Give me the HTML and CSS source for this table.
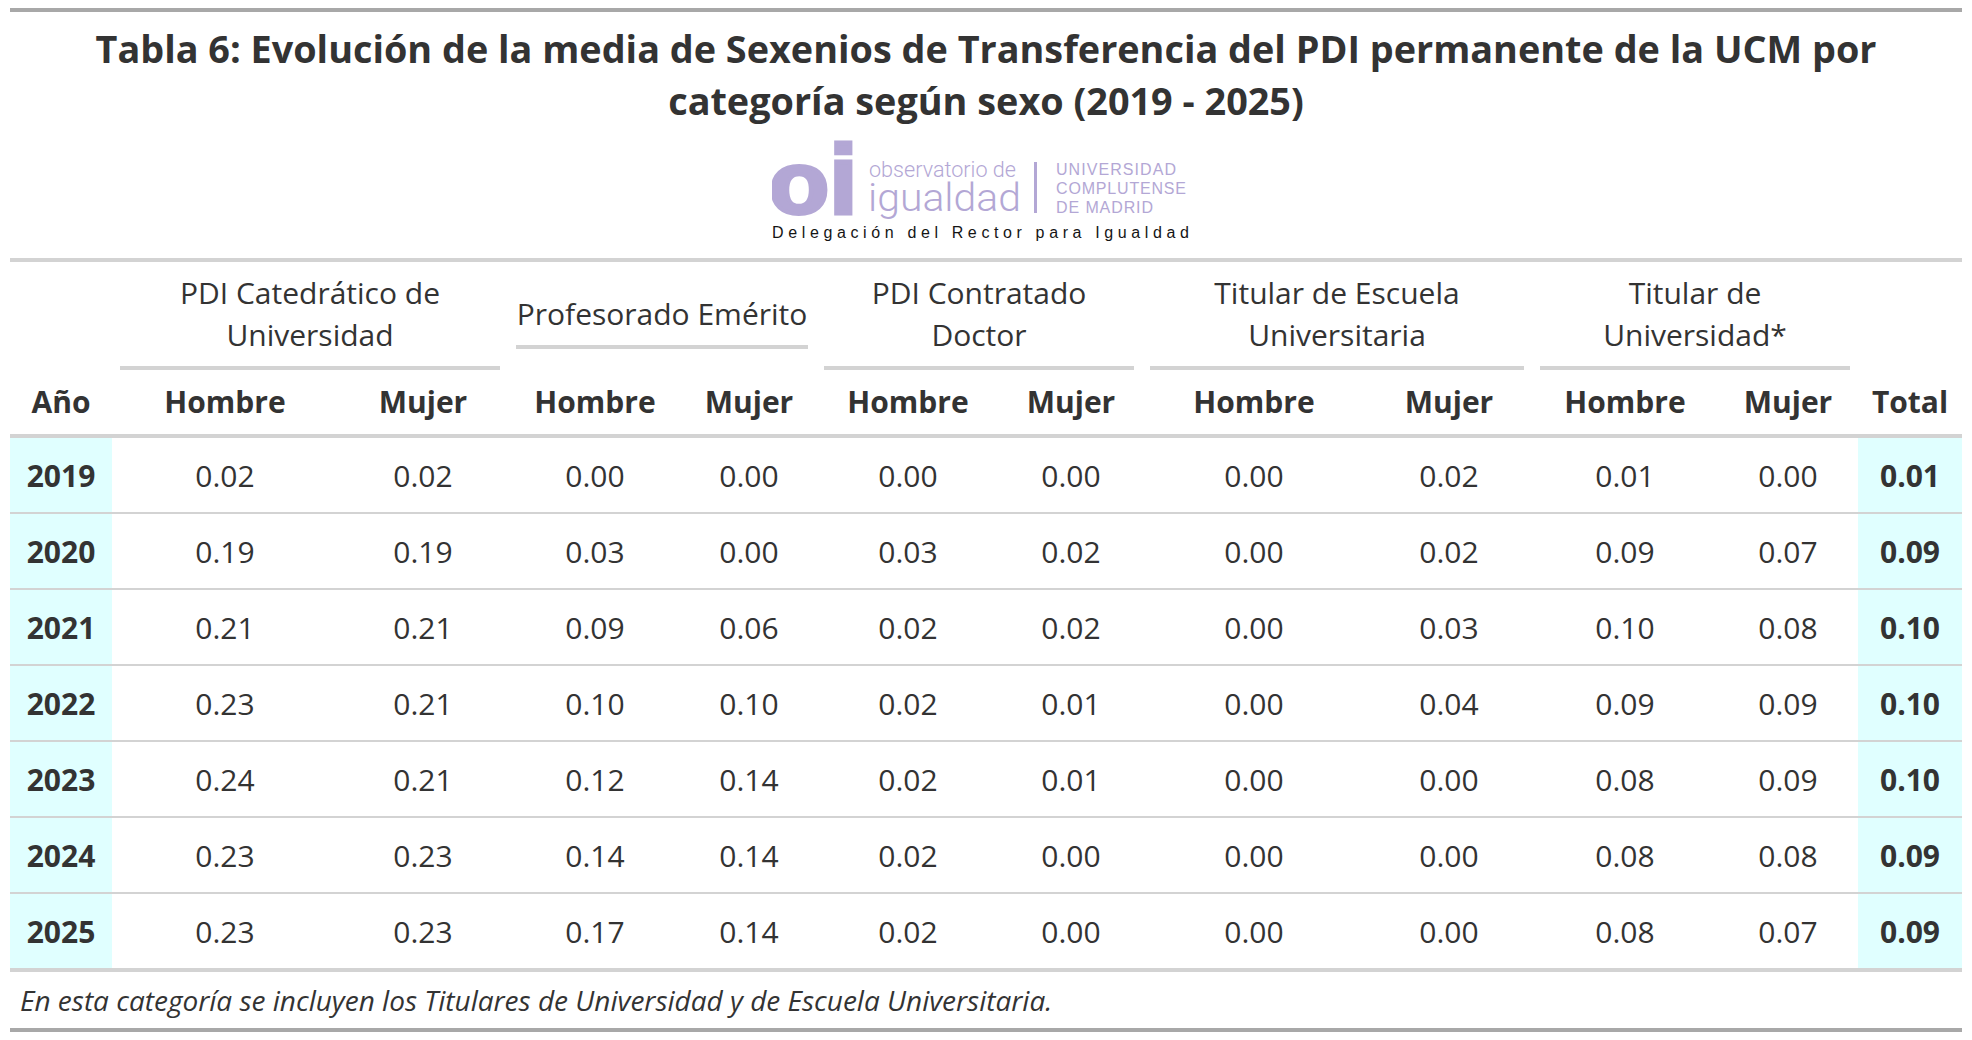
FILE: index.html
```html
<!DOCTYPE html>
<html lang="es">
<head>
<meta charset="utf-8">
<title>Tabla 6</title>
<link rel="stylesheet" href="styles.css">
</head>
<body>
<div class="gt">
  <div class="heading">
    <div class="title">Tabla 6: Evolución de la media de Sexenios de Transferencia del PDI permanente de la UCM por categoría según sexo (2019 - 2025)</div>
    <svg class="logo" width="418" height="106" viewBox="0 -4 418 106" xmlns="http://www.w3.org/2000/svg">
      <text class="lg-o" x="-3" y="71" textLength="60" lengthAdjust="spacingAndGlyphs">o</text>
      <text class="lg-i" x="58" y="71">i</text>
      <text class="lg-obs" x="97" y="35" textLength="147" lengthAdjust="spacingAndGlyphs">observatorio de</text>
      <text class="lg-ig" x="96" y="69" textLength="153" lengthAdjust="spacingAndGlyphs">igualdad</text>
      <rect class="lg-bar" x="262" y="20" width="3" height="51"/>
      <text class="lg-ucm" x="284" y="33" textLength="120">UNIVERSIDAD</text>
      <text class="lg-ucm" x="284" y="52" textLength="130">COMPLUTENSE</text>
      <text class="lg-ucm" x="284" y="71" textLength="97">DE MADRID</text>
      <text class="lg-del" x="0" y="96" textLength="417">Delegación del Rector para Igualdad</text>
    </svg>
  </div>
  <table class="tbl">
    <colgroup>
      <col class="w-stub">
      <col class="w-cu-h"><col class="w-cu-m">
      <col class="w-em-h"><col class="w-em-m">
      <col class="w-cd-h"><col class="w-cd-m">
      <col class="w-teu-h"><col class="w-teu-m">
      <col class="w-tu-h"><col class="w-tu-m">
      <col class="w-total">
    </colgroup>
    <thead>
      <tr class="spanners">
        <th rowspan="2" class="stubhead">Año</th>
        <th colspan="2" class="spanner"><div class="span-label">PDI Catedrático de<br>Universidad</div></th>
        <th colspan="2" class="spanner"><div class="span-label">Profesorado Emérito</div></th>
        <th colspan="2" class="spanner"><div class="span-label">PDI Contratado<br>Doctor</div></th>
        <th colspan="2" class="spanner"><div class="span-label">Titular de Escuela<br>Universitaria</div></th>
        <th colspan="2" class="spanner"><div class="span-label">Titular de<br>Universidad*</div></th>
        <th rowspan="2" class="stubhead">Total</th>
      </tr>
      <tr class="labels">
        <th>Hombre</th><th>Mujer</th>
        <th>Hombre</th><th>Mujer</th>
        <th>Hombre</th><th>Mujer</th>
        <th>Hombre</th><th>Mujer</th>
        <th>Hombre</th><th>Mujer</th>
      </tr>
    </thead>
    <tbody>
      <tr><td class="stub">2019</td><td>0.02</td><td>0.02</td><td>0.00</td><td>0.00</td><td>0.00</td><td>0.00</td><td>0.00</td><td>0.02</td><td>0.01</td><td>0.00</td><td class="total">0.01</td></tr>
      <tr><td class="stub">2020</td><td>0.19</td><td>0.19</td><td>0.03</td><td>0.00</td><td>0.03</td><td>0.02</td><td>0.00</td><td>0.02</td><td>0.09</td><td>0.07</td><td class="total">0.09</td></tr>
      <tr><td class="stub">2021</td><td>0.21</td><td>0.21</td><td>0.09</td><td>0.06</td><td>0.02</td><td>0.02</td><td>0.00</td><td>0.03</td><td>0.10</td><td>0.08</td><td class="total">0.10</td></tr>
      <tr><td class="stub">2022</td><td>0.23</td><td>0.21</td><td>0.10</td><td>0.10</td><td>0.02</td><td>0.01</td><td>0.00</td><td>0.04</td><td>0.09</td><td>0.09</td><td class="total">0.10</td></tr>
      <tr><td class="stub">2023</td><td>0.24</td><td>0.21</td><td>0.12</td><td>0.14</td><td>0.02</td><td>0.01</td><td>0.00</td><td>0.00</td><td>0.08</td><td>0.09</td><td class="total">0.10</td></tr>
      <tr><td class="stub">2024</td><td>0.23</td><td>0.23</td><td>0.14</td><td>0.14</td><td>0.02</td><td>0.00</td><td>0.00</td><td>0.00</td><td>0.08</td><td>0.08</td><td class="total">0.09</td></tr>
      <tr><td class="stub">2025</td><td>0.23</td><td>0.23</td><td>0.17</td><td>0.14</td><td>0.02</td><td>0.00</td><td>0.00</td><td>0.00</td><td>0.08</td><td>0.07</td><td class="total">0.09</td></tr>
    </tbody>
  </table>
  <div class="footnote">En esta categoría se incluyen los Titulares de Universidad y de Escuela Universitaria.</div>
</div>
</body>
</html>
```

FILE: styles.css
```css
html, body {
  background: #ffffff;
}

body {
  margin: 8px 10px 0;
  font-family: "Open Sans", "Liberation Sans", sans-serif;
  color: #333333;
}

.gt {
  border-top: 4px solid #a8a8a8;
  border-bottom: 4px solid #a8a8a8;
}

.heading {
  border-bottom: 4px solid #d3d3d3;
  padding: 11px 10px 14px;
  text-align: center;
}

.title {
  max-width: 1870px;
  margin: 0 auto;
  font-size: 37.8px;
  font-weight: 700;
  line-height: 52px;
  color: #333333;
}

.logo {
  display: block;
  margin: 11px auto 0;
  position: relative;
  left: -5px;
}

.lg-o,
.lg-i {
  font-family: "Liberation Sans", sans-serif;
  font-weight: 700;
  fill: #b3a7d5;
  stroke: #b3a7d5;
}

.lg-o {
  font-size: 88px;
  stroke-width: 4px;
}

.lg-i {
  font-size: 96px;
  stroke-width: 5px;
}

.lg-obs {
  font-family: Roboto, "Liberation Sans", sans-serif;
  font-weight: 300;
  font-size: 22px;
  fill: #b3a7d5;
}

.lg-ig {
  font-family: Roboto, "Liberation Sans", sans-serif;
  font-weight: 300;
  font-size: 38px;
  fill: #b3a7d5;
}

.lg-bar {
  fill: #b3a7d5;
}

.lg-ucm {
  font-family: "Liberation Sans", sans-serif;
  font-size: 16px;
  fill: #b3a7d5;
}

.lg-del {
  font-family: "Liberation Sans", sans-serif;
  font-size: 16px;
  fill: #151515;
}

.tbl {
  width: 100%;
  table-layout: fixed;
  border-collapse: separate;
  border-spacing: 0;
  font-size: 30px;
  line-height: 42px;
  color: #333333;
}

.w-stub { width: 102px; }
.w-cu-h { width: 226px; }
.w-cu-m { width: 170px; }
.w-em-h { width: 174px; }
.w-em-m { width: 134px; }
.w-cd-h { width: 184px; }
.w-cd-m { width: 142px; }
.w-teu-h { width: 224px; }
.w-teu-m { width: 166px; }
.w-tu-h { width: 186px; }
.w-tu-m { width: 140px; }
.w-total { width: 104px; }

.spanner {
  padding: 10px 8px 4px;
  font-weight: 400;
  vertical-align: middle;
  text-align: center;
}

.span-label {
  padding-bottom: 10px;
  border-bottom: 4px solid #d3d3d3;
  white-space: nowrap;
}

.labels th {
  padding: 7px 4px 11px;
  font-weight: 700;
  text-align: center;
  vertical-align: bottom;
  border-bottom: 4px solid #d3d3d3;
  white-space: nowrap;
}

.stubhead {
  padding: 0 4px 11px;
  font-weight: 700;
  text-align: center;
  vertical-align: bottom;
  border-bottom: 4px solid #d3d3d3;
}

.tbl td {
  padding: 17px 4px 15px;
  text-align: center;
  vertical-align: middle;
  border-bottom: 2px solid #d3d3d3;
  white-space: nowrap;
}

.tbl tbody tr:last-child td {
  border-bottom-width: 4px;
}

.tbl td.stub,
.tbl td.total {
  background: #e0ffff;
  font-weight: 700;
}

.footnote {
  font-style: italic;
  font-size: 28px;
  line-height: 56px;
  padding-left: 10px;
  color: #333333;
}
```
